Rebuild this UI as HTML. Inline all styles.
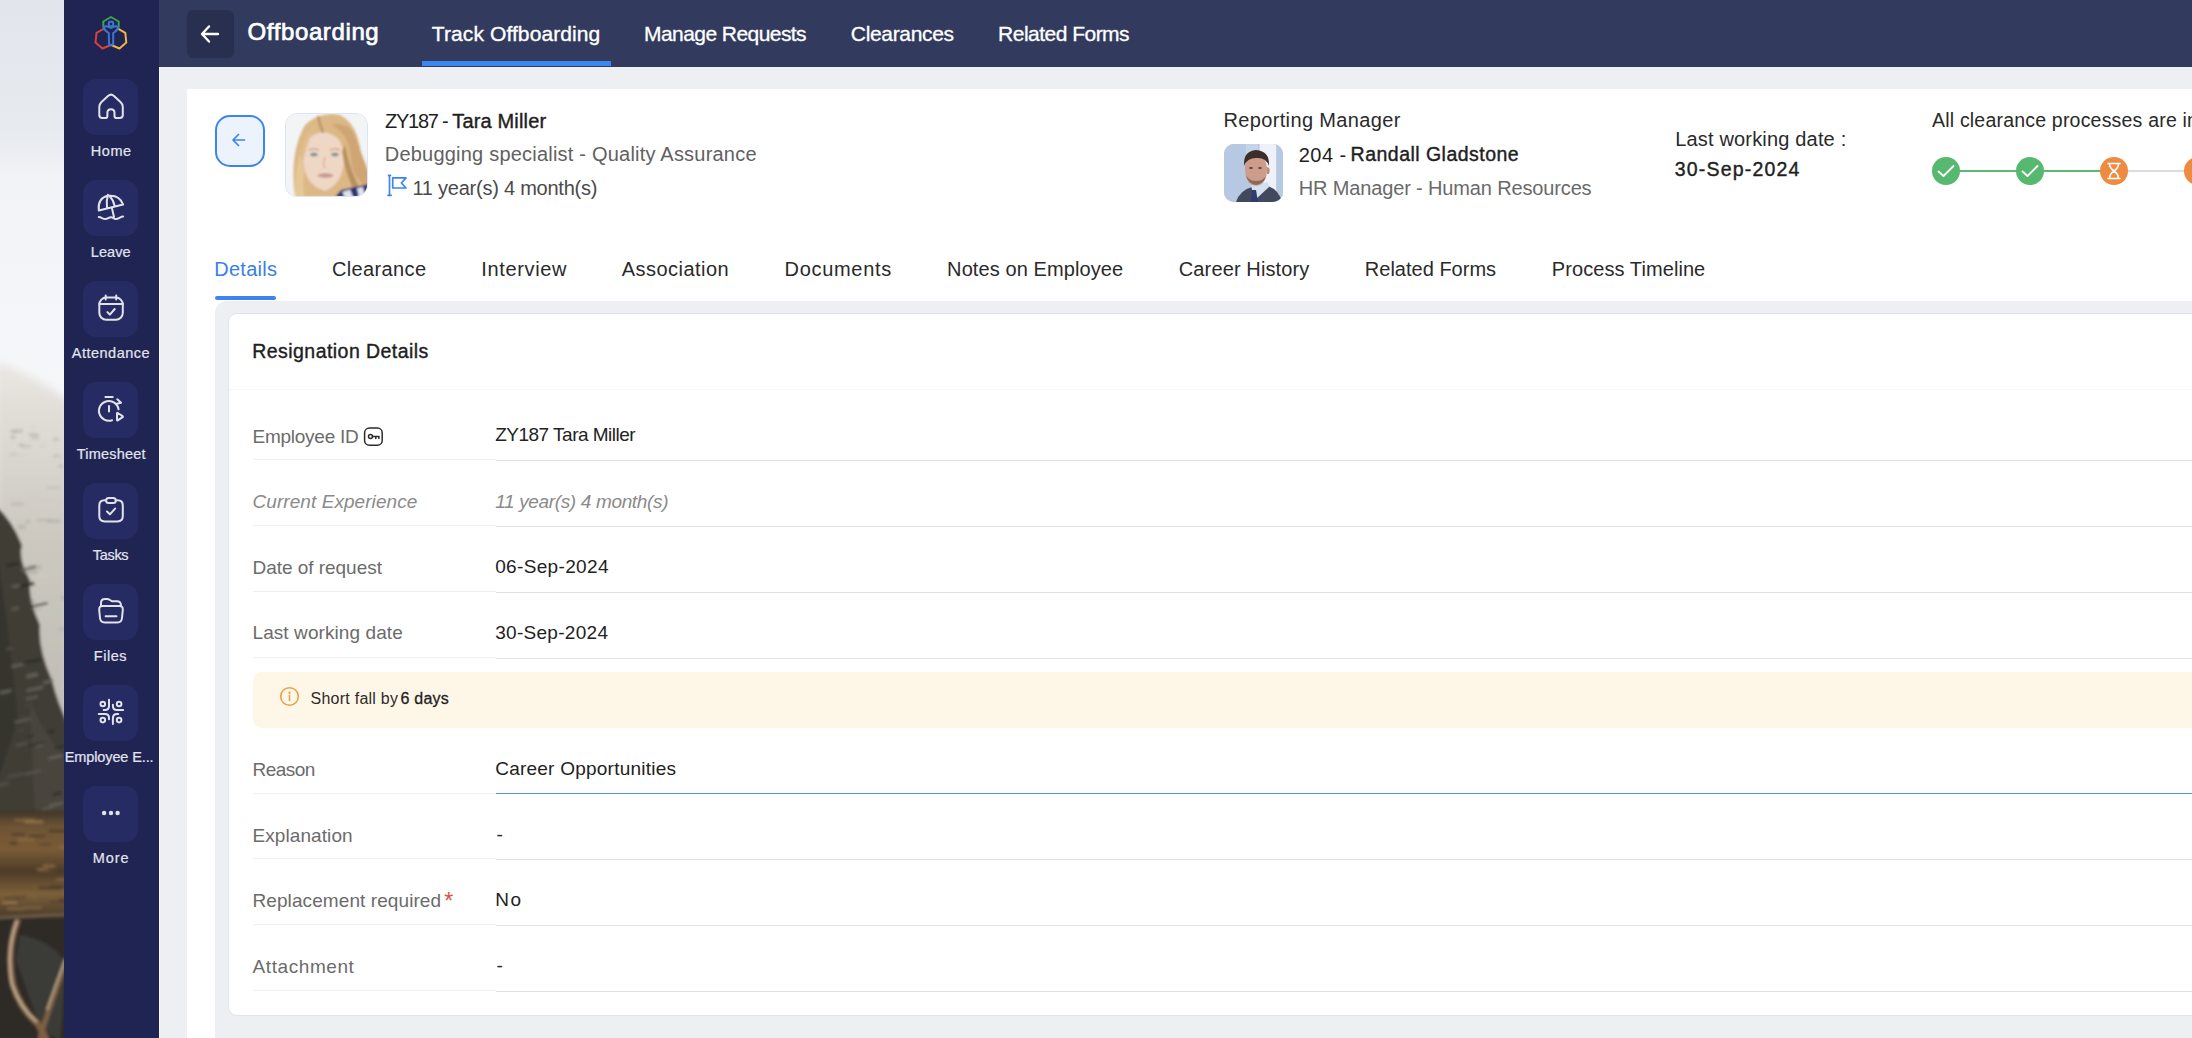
<!DOCTYPE html>
<html><head><meta charset="utf-8">
<style>
html,body{margin:0;padding:0;}
body{width:2192px;height:1038px;overflow:hidden;position:relative;background:#eeeff3;font-family:"Liberation Sans",sans-serif;}
.a{position:absolute;}
.t{position:absolute;line-height:1;white-space:nowrap;}
.sbi{position:absolute;left:83px;width:55px;height:56px;border-radius:13px;background:#262c63;}
.sbi svg{position:absolute;left:14px;top:14px;width:27px;height:27px;}
.hl{position:absolute;height:1px;}
</style></head>
<body>
<!-- left background photo strip -->
<svg class="a" style="left:0;top:0" width="64" height="1038" viewBox="0 0 64 1038">
  <defs>
    <linearGradient id="sky" x1="0" y1="0" x2="0" y2="1"><stop offset="0" stop-color="#e2e6ec"/><stop offset="0.33" stop-color="#e7eaef"/><stop offset="0.45" stop-color="#f1f3f7"/><stop offset="1" stop-color="#f6f7f9"/></linearGradient>
    <linearGradient id="mist" x1="0" y1="0" x2="0" y2="1"><stop offset="0" stop-color="#e9e7e2"/><stop offset="0.25" stop-color="#cdc9c0"/><stop offset="0.7" stop-color="#b7b4ad"/><stop offset="1" stop-color="#a8a6a0"/></linearGradient>
    <linearGradient id="brown" x1="0" y1="0" x2="0" y2="1"><stop offset="0" stop-color="#3d3428"/><stop offset="0.15" stop-color="#6e5334"/><stop offset="0.35" stop-color="#7a5b36"/><stop offset="0.55" stop-color="#4d3b28"/><stop offset="0.75" stop-color="#7d603a"/><stop offset="1" stop-color="#3f3224"/></linearGradient>
    <filter id="bl"><feGaussianBlur stdDeviation="1.5"/></filter><filter id="bl3"><feGaussianBlur stdDeviation="4"/></filter>
  </defs>
  <rect x="0" y="0" width="64" height="400" fill="url(#sky)"/>
  <g filter="url(#bl)">
  <path d="M-5 362 Q30 372 70 402 L70 1040 L-5 1040 Z" fill="url(#mist)" filter="url(#bl3)"/>
  <path d="M-5 505 Q12 520 22 545 Q18 560 30 580 Q28 600 40 625 Q38 650 52 680 Q58 705 70 728 L70 815 L-5 815 Z" fill="#3f3d36"/>
  <path d="M-5 540 Q8 620 18 720 L-5 790 Z" fill="#35342f"/>
  <path d="M30 700 Q45 740 70 760 L70 815 L35 815 Z" fill="#48453d"/>
  <rect x="-5" y="810" width="75" height="112" fill="url(#brown)"/>
  <rect x="-5" y="918" width="75" height="125" fill="#2e2b27"/><path d="M16 960 Q30 1000 42 1030 L60 1040 L66 962 Q50 940 20 935 Z" fill="#3b3a37"/>
  <rect x="20.7" y="445.3" width="10.5" height="2.2" fill="#8f8d88" opacity="0.3"/>
  <rect x="58.2" y="464.4" width="4.9" height="3.3" fill="#9c9a94" opacity="0.35"/>
  <rect x="52.9" y="437.1" width="6.2" height="3.9" fill="#a9a7a1" opacity="0.35"/>
  <rect x="36.9" y="519.0" width="13.8" height="2.1" fill="#9c9a94" opacity="0.35"/>
  <rect x="18.5" y="443.3" width="5.2" height="2.9" fill="#9c9a94" opacity="0.35"/>
  <rect x="12.0" y="429.2" width="11.1" height="3.7" fill="#8f8d88" opacity="0.3"/>
  <rect x="27.4" y="494.2" width="9.9" height="3.4" fill="#cfccc5" opacity="0.4"/>
  <rect x="15.9" y="453.9" width="11.8" height="2.2" fill="#cfccc5" opacity="0.4"/>
  <rect x="46.7" y="486.4" width="13.8" height="2.4" fill="#b3b0a9" opacity="0.4"/>
  <rect x="10.6" y="502.6" width="13.3" height="3.3" fill="#a9a7a1" opacity="0.35"/>
  <rect x="48.9" y="571.9" width="12.8" height="2.9" fill="#cfccc5" opacity="0.4"/>
  <rect x="38.0" y="574.0" width="8.6" height="4.5" fill="#cfccc5" opacity="0.4"/>
  <rect x="30.3" y="599.2" width="4.6" height="4.1" fill="#8f8d88" opacity="0.3"/>
  <rect x="63.6" y="646.6" width="6.8" height="3.2" fill="#cfccc5" opacity="0.4"/>
  <rect x="10.8" y="435.1" width="4.6" height="4.3" fill="#9c9a94" opacity="0.35"/>
  <rect x="47.3" y="519.4" width="13.2" height="3.5" fill="#9c9a94" opacity="0.35"/>
  <rect x="28.7" y="564.8" width="12.8" height="4.5" fill="#8f8d88" opacity="0.3"/>
  <rect x="17.8" y="524.6" width="7.6" height="4.7" fill="#9c9a94" opacity="0.35"/>
  <rect x="9.7" y="452.9" width="6.3" height="2.7" fill="#b3b0a9" opacity="0.4"/>
  <rect x="53.2" y="454.7" width="6.8" height="2.4" fill="#8f8d88" opacity="0.3"/>
  <rect x="23.6" y="569.9" width="13.5" height="4.1" fill="#8f8d88" opacity="0.3"/>
  <rect x="60.8" y="596.5" width="11.4" height="3.4" fill="#8f8d88" opacity="0.3"/>
  <rect x="25.1" y="519.7" width="5.0" height="3.9" fill="#a9a7a1" opacity="0.35"/>
  <rect x="28.2" y="433.0" width="10.0" height="2.3" fill="#8f8d88" opacity="0.3"/>
  <rect x="9.7" y="430.4" width="7.6" height="2.1" fill="#9c9a94" opacity="0.35"/>
  <rect x="39.3" y="444.6" width="6.5" height="3.0" fill="#cfccc5" opacity="0.4"/>
  <rect x="30.3" y="434.6" width="8.9" height="4.9" fill="#b3b0a9" opacity="0.4"/>
  <rect x="31.0" y="425.8" width="5.0" height="3.0" fill="#cfccc5" opacity="0.4"/>
  <rect x="30.6" y="607.6" width="9.2" height="2.6" fill="#8f8d88" opacity="0.3"/>
  <rect x="58.5" y="627.4" width="7.0" height="3.9" fill="#a9a7a1" opacity="0.35"/>
  <rect x="20.7" y="568.4" width="15.3" height="3.1" fill="#6a675e" opacity="0.8" transform="rotate(-12 20.7 568.4)"/>
  <rect x="18.4" y="584.7" width="15.7" height="4.0" fill="#2c2d28" opacity="0.8" transform="rotate(-12 18.4 584.7)"/>
  <rect x="48.0" y="757.3" width="14.9" height="2.5" fill="#6a675e" opacity="0.8" transform="rotate(-12 48.0 757.3)"/>
  <rect x="28.6" y="732.0" width="17.9" height="3.6" fill="#47443b" opacity="0.8" transform="rotate(-12 28.6 732.0)"/>
  <rect x="14.1" y="720.8" width="17.5" height="2.9" fill="#5e5b52" opacity="0.8" transform="rotate(-12 14.1 720.8)"/>
  <rect x="11.7" y="585.8" width="8.4" height="2.4" fill="#6a675e" opacity="0.8" transform="rotate(-12 11.7 585.8)"/>
  <rect x="-1.9" y="783.7" width="10.1" height="3.3" fill="#54524a" opacity="0.8" transform="rotate(-12 -1.9 783.7)"/>
  <rect x="54.4" y="746.9" width="15.0" height="3.0" fill="#2c2d28" opacity="0.8" transform="rotate(-12 54.4 746.9)"/>
  <rect x="24.9" y="704.4" width="7.0" height="3.9" fill="#47443b" opacity="0.8" transform="rotate(-12 24.9 704.4)"/>
  <rect x="26.7" y="735.6" width="7.0" height="2.3" fill="#2c2d28" opacity="0.8" transform="rotate(-12 26.7 735.6)"/>
  <rect x="-0.3" y="691.3" width="11.6" height="3.3" fill="#6a675e" opacity="0.8" transform="rotate(-12 -0.3 691.3)"/>
  <rect x="49.2" y="804.3" width="13.9" height="2.7" fill="#6a675e" opacity="0.8" transform="rotate(-12 49.2 804.3)"/>
  <rect x="47.6" y="730.6" width="7.2" height="3.5" fill="#2c2d28" opacity="0.8" transform="rotate(-12 47.6 730.6)"/>
  <rect x="24.9" y="772.8" width="15.9" height="2.4" fill="#5e5b52" opacity="0.8" transform="rotate(-12 24.9 772.8)"/>
  <rect x="11.2" y="665.3" width="15.2" height="2.7" fill="#6a675e" opacity="0.8" transform="rotate(-12 11.2 665.3)"/>
  <rect x="26.4" y="689.2" width="16.9" height="2.8" fill="#6a675e" opacity="0.8" transform="rotate(-12 26.4 689.2)"/>
  <rect x="6.1" y="564.0" width="12.1" height="3.7" fill="#2c2d28" opacity="0.8" transform="rotate(-12 6.1 564.0)"/>
  <rect x="35.7" y="745.1" width="7.8" height="2.3" fill="#6a675e" opacity="0.8" transform="rotate(-12 35.7 745.1)"/>
  <rect x="43.0" y="681.4" width="9.9" height="3.0" fill="#6a675e" opacity="0.8" transform="rotate(-12 43.0 681.4)"/>
  <rect x="27.9" y="745.2" width="16.6" height="2.1" fill="#2c2d28" opacity="0.8" transform="rotate(-12 27.9 745.2)"/>
  <rect x="15.2" y="744.0" width="12.1" height="3.1" fill="#54524a" opacity="0.8" transform="rotate(-12 15.2 744.0)"/>
  <rect x="25.5" y="697.6" width="12.1" height="3.0" fill="#5e5b52" opacity="0.8" transform="rotate(-12 25.5 697.6)"/>
  <rect x="26.0" y="674.7" width="11.7" height="3.9" fill="#6a675e" opacity="0.8" transform="rotate(-12 26.0 674.7)"/>
  <rect x="52.3" y="793.2" width="9.1" height="3.1" fill="#2c2d28" opacity="0.8" transform="rotate(-12 52.3 793.2)"/>
  <rect x="5.5" y="648.2" width="6.9" height="2.5" fill="#54524a" opacity="0.8" transform="rotate(-12 5.5 648.2)"/>
  <rect x="11.2" y="607.8" width="7.5" height="3.6" fill="#5e5b52" opacity="0.8" transform="rotate(-12 11.2 607.8)"/>
  <rect x="6.9" y="776.0" width="17.6" height="2.4" fill="#54524a" opacity="0.8" transform="rotate(-12 6.9 776.0)"/>
  <rect x="22.7" y="661.3" width="17.9" height="3.7" fill="#2c2d28" opacity="0.8" transform="rotate(-12 22.7 661.3)"/>
  <rect x="41.8" y="808.3" width="10.8" height="2.8" fill="#5e5b52" opacity="0.8" transform="rotate(-12 41.8 808.3)"/>
  <rect x="17.7" y="729.4" width="6.2" height="3.1" fill="#47443b" opacity="0.8" transform="rotate(-12 17.7 729.4)"/>
  <rect x="30.1" y="605.7" width="17.5" height="2.2" fill="#2c2d28" opacity="0.8" transform="rotate(-12 30.1 605.7)"/>
  <rect x="14.5" y="819.0" width="20.5" height="2.5" fill="#8a6a45" opacity="0.8"/>
  <rect x="48.8" y="900.0" width="18.8" height="3.9" fill="#5c472f" opacity="0.8"/>
  <rect x="7.3" y="906.9" width="17.1" height="3.4" fill="#7e6040" opacity="0.8"/>
  <rect x="15.3" y="895.0" width="10.9" height="3.8" fill="#4a3a28" opacity="0.8"/>
  <rect x="56.2" y="878.4" width="20.8" height="2.2" fill="#8a6a45" opacity="0.8"/>
  <rect x="2.1" y="901.3" width="15.3" height="2.7" fill="#9a7a50" opacity="0.8"/>
  <rect x="23.9" y="906.5" width="17.9" height="2.1" fill="#8a6a45" opacity="0.8"/>
  <rect x="56.2" y="911.9" width="12.2" height="2.4" fill="#4a3a28" opacity="0.8"/>
  <rect x="37.0" y="868.1" width="11.3" height="2.9" fill="#8a6a45" opacity="0.8"/>
  <rect x="14.8" y="895.4" width="23.9" height="2.1" fill="#7e6040" opacity="0.8"/>
  <rect x="43.5" y="870.1" width="11.0" height="2.9" fill="#5c472f" opacity="0.8"/>
  <rect x="4.6" y="896.9" width="14.9" height="3.0" fill="#5c472f" opacity="0.8"/>
  <rect x="58.2" y="845.8" width="11.4" height="2.5" fill="#8a6a45" opacity="0.8"/>
  <rect x="49.6" y="885.7" width="18.2" height="2.8" fill="#4a3a28" opacity="0.8"/>
  <rect x="58.9" y="898.7" width="8.2" height="3.3" fill="#4a3a28" opacity="0.8"/>
  <rect x="24.7" y="820.5" width="18.6" height="2.8" fill="#9a7a50" opacity="0.8"/>
  <rect x="39.6" y="843.2" width="11.9" height="2.6" fill="#5c472f" opacity="0.8"/>
  <rect x="9.5" y="841.9" width="8.1" height="2.7" fill="#4a3a28" opacity="0.8"/>
  <rect x="58.3" y="869.7" width="11.9" height="3.9" fill="#4a3a28" opacity="0.8"/>
  <rect x="11.5" y="833.3" width="13.4" height="2.2" fill="#4a3a28" opacity="0.8"/>
  <rect x="29.2" y="835.1" width="16.1" height="2.0" fill="#4a3a28" opacity="0.8"/>
  <rect x="48.7" y="829.4" width="17.4" height="2.8" fill="#4a3a28" opacity="0.8"/>
  <rect x="16.9" y="838.3" width="17.4" height="3.1" fill="#8a6a45" opacity="0.8"/>
  <rect x="38.8" y="886.6" width="22.1" height="2.8" fill="#4a3a28" opacity="0.8"/>
  <rect x="42.7" y="864.4" width="12.5" height="3.2" fill="#8a6a45" opacity="0.8"/>
  <path d="M18 919 Q6 950 13 985 Q21 1010 38 1024 L47 1040" stroke="#7d6043" stroke-width="6" fill="none"/>
  <path d="M17 921 Q6 950 12 984 Q20 1008 37 1022" stroke="#d9c9b0" stroke-width="1.6" fill="none"/>
  <path d="M67 958 Q56 990 49 1010 Q42 1030 40 1040" stroke="#7d6043" stroke-width="5" fill="none"/>
  <path d="M65 960 Q54 990 47 1010" stroke="#cdbb9f" stroke-width="1.4" fill="none"/>
  <path d="M-5 918 Q30 916 70 914" stroke="#6f5e48" stroke-width="2.5" fill="none"/>
  </g>
</svg>
<!-- sidebar -->
<div class="a" style="left:64px;top:0;width:95px;height:1038px;background:#1f2453;"></div>
<div class="a" style="left:159px;top:67px;width:1px;height:971px;background:#f7f8fa;"></div>
<!-- logo -->
<svg class="a" style="left:92px;top:15px" width="38" height="37" viewBox="0 0 38 37">
  <g fill="none" stroke-width="2" stroke-linejoin="round">
    <path d="M13 13.2 L4.5 17.8 L3.5 27.5 L10.5 33.5 L18.8 30" stroke="#d9423a"/>
    <path d="M25 13.2 L33.3 17.8 L34.3 27.5 L27.5 33.5 L19.2 30" stroke="#f2b640"/>
    <path d="M11.3 12.4 L11.3 6.5 L19 2 L26.7 6.5 L26.7 12.4" stroke="#3ea34a"/>
    <path d="M12 12 Q14.5 10.2 19 13 Q23.5 10.2 26 12 Q26.3 14.5 22 17.5 L21.2 18 L21.2 29 Q19 31.2 17 29 L16.8 18 L16 17.5 Q11.7 14.5 12 12 Z" stroke="#3a78d0"/>
    <rect x="16.8" y="6.8" width="4.4" height="4.4" rx="1.2" stroke="#3a78d0"/>
  </g>
</svg>
<!-- sidebar icons -->
<div class="sbi" style="top:79px"></div>
<svg class="a" style="left:92px;top:87px" width="38" height="38" viewBox="0 0 38 38" fill="none" stroke="#e2e3ea" stroke-width="2" stroke-linejoin="round" stroke-linecap="round"><path d="M7.3 20 Q7.3 17 9.5 15 L16 9 Q19 6.3 22 9 L28.5 15 Q30.8 17 30.8 20 V28 Q30.8 31.1 27.7 31.1 H24.5 Q22.5 31.1 22.5 29 V25.8 Q22.5 22.3 19 22.3 Q15.4 22.3 15.4 25.8 V29 Q15.4 31.1 13.3 31.1 H10.4 Q7.3 31.1 7.3 28 Z"/></svg>
<div class="sbi" style="top:180px"></div>
<svg class="a" style="left:92px;top:188px" width="38" height="38" viewBox="0 0 38 38" fill="none" stroke="#e2e3ea" stroke-width="2" stroke-linejoin="round" stroke-linecap="round"><path d="M6.8 22.5 Q5.5 10 15.9 7.8 Q27.5 6.5 31.1 16.5 Z M15.9 7.5 Q14 13 15 19.7 M17.5 8 Q21.5 12 22.5 17.8 M19.8 19.5 L22 29 M15.9 6.8 V8"/><path d="M6.8 29.1 C9.5 29.1 10.5 31.1 13.2 31.1 C16 31.1 16.5 29.3 19 29.3 C21.5 29.3 21.5 31.1 23.8 31.1 C26.5 31.1 28.5 28.6 31.1 28.6"/></svg>
<div class="sbi" style="top:281px"></div>
<svg class="a" style="left:92px;top:289px" width="38" height="38" viewBox="0 0 38 38" fill="none" stroke="#e2e3ea" stroke-width="2" stroke-linejoin="round" stroke-linecap="round"><rect x="7.3" y="8.6" width="23.5" height="22.2" rx="7"/><path d="M7.3 15 H30.8 M13.7 6.6 V10.6 M24.2 6.6 V10.6 M15.4 23.1 L17.9 25.6 L22.7 20"/></svg>
<div class="sbi" style="top:382px"></div>
<svg class="a" style="left:92px;top:390px" width="38" height="38" viewBox="0 0 38 38" fill="none" stroke="#e2e3ea" stroke-width="2" stroke-linejoin="round" stroke-linecap="round"><path d="M13.4 7.1 H20.7 M17 16.1 V21.6 M20.1 30.2 A9.9 9.9 0 1 1 26.6 19.3 M25.3 9.2 L29 12.8 L24.8 13.8"/><path d="M25 23.3 Q25 22.6 25.7 23 L30.6 26.2 Q31.2 26.7 30.6 27.2 L25.7 30.4 Q25 30.8 25 30 Z"/></svg>
<div class="sbi" style="top:483px"></div>
<svg class="a" style="left:92px;top:491px" width="38" height="38" viewBox="0 0 38 38" fill="none" stroke="#e2e3ea" stroke-width="2" stroke-linejoin="round" stroke-linecap="round"><path d="M14.1 9.2 H12.5 Q7.3 9.2 7.3 14.5 V25 Q7.3 30.4 12.7 30.4 H25.4 Q30.8 30.4 30.8 25 V14.5 Q30.8 9.2 25.5 9.2 H23.8"/><rect x="14.1" y="7" width="9.7" height="5.1" rx="2.5"/><path d="M15 20.5 L17.9 23.3 L23.1 17.6"/></svg>
<div class="sbi" style="top:584px"></div>
<svg class="a" style="left:92px;top:592px" width="38" height="38" viewBox="0 0 38 38" fill="none" stroke="#e2e3ea" stroke-width="2" stroke-linejoin="round" stroke-linecap="round"><path d="M10.5 13.9 H27.5 Q31 13.9 30.8 18 L30 26 Q29.6 30.4 25.5 30.4 H12.5 Q8.4 30.4 8 26 L7.2 18 Q7 13.9 10.5 13.9 Z M9 13.9 V11 Q9 7 13 7 H15 Q16.5 7 18 8 L19.5 9 Q20.2 9.3 21 9.3 H25 Q28.8 9.3 29 13.5 M13.6 24.2 H24.5"/></svg>
<div class="sbi" style="top:685px"></div>
<svg class="a" style="left:92px;top:693px" width="38" height="38" viewBox="0 0 38 38" fill="none" stroke="#e2e3ea" stroke-width="2" stroke-linejoin="round" stroke-linecap="round"><circle cx="10.8" cy="11" r="2.3"/><circle cx="27.1" cy="11" r="2.3"/><circle cx="10.8" cy="27.1" r="2.3"/><circle cx="27.1" cy="27.1" r="2.3"/><path d="M17 6.8 V13 Q17 17 13 17 H11.7 M20.9 11.7 V13 Q20.9 17 25 17 H31.1 M6.8 21.1 H13 Q17 21.1 17 25 V26.2 M26.2 21.1 H25 Q20.9 21.1 20.9 25.5 V31.1"/></svg>
<div class="sbi" style="top:786px"></div>
<svg class="a" style="left:92px;top:794px" width="38" height="38" viewBox="0 0 38 38" fill="#e2e3ea"><circle cx="12.1" cy="19" r="2.2"/><circle cx="19" cy="19" r="2.2"/><circle cx="25.6" cy="19" r="2.2"/></svg>

<!-- top nav -->
<div class="a" style="left:159px;top:0;width:2033px;height:67px;background:#323b5e;"></div>
<div class="a" style="left:187px;top:10px;width:47px;height:48px;border-radius:6px;background:#29304f;"></div>
<svg class="a" style="left:199px;top:23px" width="22" height="22" viewBox="0 0 22 22" fill="none" stroke="#fff" stroke-width="2.4" stroke-linecap="round" stroke-linejoin="round"><path d="M19 11 H3.5 M10 3.5 L3 11 L10 18.5"/></svg>
<div class="a" style="left:422px;top:61px;width:189px;height:5px;background:#3b86f0;"></div>

<!-- header card -->
<div class="a" style="left:187px;top:89px;width:2005px;height:949px;background:#fff;"></div>
<div class="a" style="left:215px;top:115px;width:46px;height:48px;border:2.5px solid #3b84f2;border-radius:15px;background:#edf3fd;"></div>
<svg class="a" style="left:229px;top:130px" width="20" height="20" viewBox="0 0 20 20" fill="none" stroke="#3b84f2" stroke-width="1.7" stroke-linecap="round" stroke-linejoin="round"><path d="M15.5 10 H4.5 M9.5 4.5 L4 10 L9.5 15.5"/></svg>

<!-- avatar 1 -->
<div class="a" style="left:285px;top:113px;width:83px;height:84px;border-radius:12px;overflow:hidden;border:1px solid #dde5f1;box-sizing:border-box;background:#f3f4f6;">
<svg class="a" style="left:-1px;top:-1px" width="83" height="84" viewBox="0 0 83 84">
  <defs><filter id="sf"><feGaussianBlur stdDeviation="0.8"/></filter></defs>
  <rect width="83" height="84" fill="#f3f4f6"/>
  <g filter="url(#sf)">
  <path d="M10 84 Q4 40 20 12 Q35 -2 55 2 Q72 10 76 40 Q79 60 84 70 L84 84 Z" fill="#dcb886"/>
  <path d="M18 46 Q18 21 38 19 Q59 21 59 46 Q58 71 40 78 Q19 72 18 46 Z" fill="#efd7c6"/>
  <path d="M15 60 Q13 24 34 8 Q24 22 19 45 Z" fill="#e0bf8c"/>
  <path d="M46 12 Q64 20 66 46 Q68 66 84 76 L84 60 Q76 40 70 22 Q62 8 46 12 Z" fill="#cfa673"/>
  <path d="M60 32 Q64 56 77 80 L71 82 Q60 60 57 38 Z" fill="#b98f5f"/>
  <path d="M33 3 Q35 12 38 20" stroke="#b08c62" stroke-width="2" fill="none"/>
  <path d="M10 84 Q9 60 15 40 L19 60 Q17 75 20 84 Z" fill="#e6c796"/>
  <path d="M24 37 Q29 35 34 37 M45 37 Q50 35 55 37" stroke="#b48d6e" stroke-width="1.2" fill="none"/>
  <ellipse cx="29" cy="41.5" rx="3.8" ry="1.8" fill="#7d8c8c"/><ellipse cx="50" cy="41.5" rx="3.8" ry="1.8" fill="#7d8c8c"/>
  <path d="M40 44 Q37 53 40.5 55" stroke="#d7b29c" stroke-width="1.5" fill="none"/>
  <ellipse cx="40.5" cy="62.5" rx="8" ry="2.2" fill="#c99593"/>
  <path d="M50 84 L56 77 Q70 74 84 71 L84 84 Z" fill="#2d3670"/>
  <path d="M57 79 L65 76.5 L68 84 L60 84 Z M72 75 L78 74 L80 84 L74 84 Z" fill="#dfe3ef"/>
  </g>
</svg></div>
<svg class="a" style="left:386px;top:173px" width="22" height="24" viewBox="0 0 22 24" fill="none" stroke="#3b84f2" stroke-width="1.7" stroke-linejoin="round" stroke-linecap="round"><path d="M3.5 2.6 V22.2 M2.6 2.4 H4.5 M2 22.3 H5.2"/><path d="M6.7 4.9 H20 L15.4 10 L20 15 H6.7 Z"/></svg>

<!-- avatar 2 -->
<div class="a" style="left:1224px;top:144px;width:59px;height:58px;border-radius:10px;overflow:hidden;background:#b5c8e2;">
<svg class="a" style="left:0;top:0" width="59" height="58" viewBox="0 0 59 58">
  <defs><filter id="sf2"><feGaussianBlur stdDeviation="0.6"/></filter></defs>
  <rect width="59" height="58" fill="#b7c9e2"/>
  <g filter="url(#sf2)">
  <rect x="35.6" y="0" width="16.5" height="52" fill="#eef2f8"/>
  <rect x="22" y="0" width="12" height="12" fill="#c5d4e8"/>
  <path d="M12 58 Q16 46 28 43 L44 42 Q55 46 58 58 Z" fill="#434a5e"/>
  <path d="M27 42 L31 56 L45 43 L44 38 Z" fill="#d3e0ef"/>
  <path d="M28 46 L32 46 L34 58 L27 58 Z" fill="#2e3a70"/>
  <path d="M21 24 Q21 12 32 11 Q43 12 43 26 Q43 37 36 41 Q30 43 25 39 Q21 34 21 24 Z" fill="#cd9c8a"/>
  <path d="M22 31 Q24 40 32 41 Q40 40 42 32 Q39 37 32 37 Q25 37 22 31 Z" fill="#8a6a5c"/>
  <path d="M43 23 Q47 23 45 30 L43 30 Z" fill="#c08b76"/>
  <path d="M20 22 Q19 7 32 6 Q46 7 45 22 Q42 13 32 14 Q23 14 20 22 Z" fill="#3b2f29"/>
  <ellipse cx="27" cy="24" rx="2" ry="0.9" fill="#5a4a48"/><ellipse cx="36" cy="24" rx="2" ry="0.9" fill="#5a4a48"/>
  </g>
</svg></div>

<!-- clearance progress -->
<div class="a" style="left:1945px;top:169.5px;width:168px;height:2.5px;background:#5cb973;"></div>
<div class="a" style="left:2113px;top:169.5px;width:90px;height:2.5px;background:#dcdcdc;"></div>
<div class="a" style="left:1931.5px;top:157px;width:28px;height:28px;border-radius:50%;background:#57b96f;"></div>
<div class="a" style="left:2015.5px;top:157px;width:28px;height:28px;border-radius:50%;background:#57b96f;"></div>
<div class="a" style="left:2099.5px;top:157px;width:28px;height:28px;border-radius:50%;background:#ee8b41;"></div>
<div class="a" style="left:2183.5px;top:157px;width:28px;height:28px;border-radius:50%;background:#ee8b41;"></div>
<svg class="a" style="left:1931.5px;top:157px" width="28" height="28" viewBox="0 0 28 28" fill="none" stroke="#fff" stroke-width="1.8" stroke-linecap="round" stroke-linejoin="round"><path d="M6.5 14.5 L11.5 19 L21.5 9"/></svg>
<svg class="a" style="left:2015.5px;top:157px" width="28" height="28" viewBox="0 0 28 28" fill="none" stroke="#fff" stroke-width="1.8" stroke-linecap="round" stroke-linejoin="round"><path d="M6.5 14.5 L11.5 19 L21.5 9"/></svg>
<svg class="a" style="left:2099.5px;top:157px" width="28" height="28" viewBox="0 0 28 28" fill="none" stroke="#fff" stroke-width="1.6" stroke-linecap="round" stroke-linejoin="round"><path d="M8 6.5 H20 M8 21.5 H20 M9.5 6.5 Q9.5 11 14 14 Q18.5 11 18.5 6.5 M9.5 21.5 Q9.5 17 14 14 Q18.5 17 18.5 21.5"/></svg>

<!-- tabs underline -->
<div class="a" style="left:215px;top:296px;width:61px;height:4px;border-radius:2px;background:#3b84f2;"></div>

<!-- grey panel -->
<div class="a" style="left:215px;top:300.5px;width:1977px;height:738px;border-radius:12px 0 0 0;background:#eeeff3;"></div>
<!-- card -->
<div class="a" style="left:228px;top:313px;width:1980px;height:703px;border:1px solid #dfe5ef;border-radius:9px;background:#fff;box-sizing:border-box;"></div>
<div class="hl" style="left:229px;top:389px;width:1963px;background:#f6f7f9;"></div>

<!-- row lines -->
<div class="hl" style="left:253px;top:459px;width:243px;background:#f0f0f0;"></div><div class="hl" style="left:496px;top:460px;width:1696px;background:#e1e1e1;"></div>
<div class="hl" style="left:253px;top:525px;width:243px;background:#f0f0f0;"></div><div class="hl" style="left:496px;top:525.5px;width:1696px;background:#e1e1e1;"></div>
<div class="hl" style="left:253px;top:591px;width:243px;background:#f0f0f0;"></div><div class="hl" style="left:496px;top:591.5px;width:1696px;background:#e1e1e1;"></div>
<div class="hl" style="left:253px;top:657px;width:243px;background:#f0f0f0;"></div><div class="hl" style="left:496px;top:657.5px;width:1696px;background:#e1e1e1;"></div>
<!-- banner -->
<div class="a" style="left:253px;top:671.5px;width:1939px;height:56.5px;border-radius:9px 0 0 9px;background:#fef7e7;"></div>
<svg class="a" style="left:279px;top:686px" width="21" height="21" viewBox="0 0 21 21" fill="none" stroke="#e9a243" stroke-width="1.6" stroke-linecap="round"><circle cx="10.5" cy="10.5" r="8.8"/><path d="M10.5 9.5 V14.5"/><circle cx="10.5" cy="6.8" r="0.4" fill="#e9a243"/></svg>
<div class="hl" style="left:253px;top:793px;width:243px;background:#f0f0f0;"></div><div class="hl" style="left:496px;top:793px;width:1696px;background:#5b95e8;"></div>
<div class="hl" style="left:253px;top:858px;width:243px;background:#f0f0f0;"></div><div class="hl" style="left:496px;top:858.5px;width:1696px;background:#e1e1e1;"></div>
<div class="hl" style="left:253px;top:924px;width:243px;background:#f0f0f0;"></div><div class="hl" style="left:496px;top:924.5px;width:1696px;background:#e1e1e1;"></div>
<div class="hl" style="left:253px;top:990px;width:243px;background:#f0f0f0;"></div><div class="hl" style="left:496px;top:990.5px;width:1696px;background:#e1e1e1;"></div>
<!-- key icon -->
<svg class="a" style="left:363px;top:427px" width="21" height="20" viewBox="0 0 21 20" fill="none" stroke="#2a2a2a" stroke-width="1.5" stroke-linecap="round" stroke-linejoin="round"><rect x="1.6" y="1" width="17.6" height="17.2" rx="4.8"/><circle cx="7.5" cy="9.5" r="2"/><path d="M9.5 9.5 H16 M12.8 9.5 V11.5 M15.9 9.5 V11.5"/></svg>

<div class="t" style="left:247.5px;top:20.28px;font-size:24px;font-weight:400;font-style:normal;color:#ffffff;letter-spacing:0.622px;-webkit-text-stroke:0.7px #fff;">Offboarding</div>
<div class="t" style="left:431.8px;top:22.82px;font-size:21px;font-weight:400;font-style:normal;color:#ffffff;letter-spacing:0.099px;-webkit-text-stroke:0.35px #fff;">Track Offboarding</div>
<div class="t" style="left:644.0px;top:22.72px;font-size:21px;font-weight:400;font-style:normal;color:#ffffff;letter-spacing:-0.560px;-webkit-text-stroke:0.3px #fff;">Manage Requests</div>
<div class="t" style="left:850.8px;top:22.52px;font-size:21px;font-weight:400;font-style:normal;color:#ffffff;letter-spacing:-0.336px;-webkit-text-stroke:0.3px #fff;">Clearances</div>
<div class="t" style="left:998.1px;top:22.52px;font-size:21px;font-weight:400;font-style:normal;color:#ffffff;letter-spacing:-0.517px;-webkit-text-stroke:0.3px #fff;">Related Forms</div>
<div class="t" style="left:90.8px;top:143.53px;font-size:14.5px;font-weight:400;font-style:normal;color:#e3e5ee;letter-spacing:0.541px;-webkit-text-stroke:0.2px #e3e5ee;">Home</div>
<div class="t" style="left:90.8px;top:244.53px;font-size:14.5px;font-weight:400;font-style:normal;color:#e3e5ee;letter-spacing:0.073px;-webkit-text-stroke:0.2px #e3e5ee;">Leave</div>
<div class="t" style="left:71.8px;top:345.53px;font-size:14.5px;font-weight:400;font-style:normal;color:#e3e5ee;letter-spacing:0.493px;-webkit-text-stroke:0.2px #e3e5ee;">Attendance</div>
<div class="t" style="left:76.8px;top:446.53px;font-size:14.5px;font-weight:400;font-style:normal;color:#e3e5ee;letter-spacing:0.206px;-webkit-text-stroke:0.2px #e3e5ee;">Timesheet</div>
<div class="t" style="left:92.8px;top:547.53px;font-size:14.5px;font-weight:400;font-style:normal;color:#e3e5ee;letter-spacing:-0.316px;-webkit-text-stroke:0.2px #e3e5ee;">Tasks</div>
<div class="t" style="left:93.8px;top:648.53px;font-size:14.5px;font-weight:400;font-style:normal;color:#e3e5ee;letter-spacing:0.546px;-webkit-text-stroke:0.2px #e3e5ee;">Files</div>
<div class="t" style="left:64.8px;top:749.53px;font-size:14.5px;font-weight:400;font-style:normal;color:#e3e5ee;letter-spacing:-0.122px;-webkit-text-stroke:0.2px #e3e5ee;">Employee E...</div>
<div class="t" style="left:92.8px;top:850.53px;font-size:14.5px;font-weight:400;font-style:normal;color:#e3e5ee;letter-spacing:0.921px;-webkit-text-stroke:0.2px #e3e5ee;">More</div>
<div class="t" style="left:385.0px;top:110.87px;font-size:20px;font-weight:400;font-style:normal;color:#1f1f1f;letter-spacing:-1.240px;">ZY187 -</div>
<div class="t" style="left:452.3px;top:110.87px;font-size:20px;font-weight:400;font-style:normal;color:#1f1f1f;letter-spacing:0.156px;-webkit-text-stroke:0.4px #1f1f1f;">Tara Miller</div>
<div class="t" style="left:384.8px;top:144.27px;font-size:20px;font-weight:400;font-style:normal;color:#616161;letter-spacing:0.210px;">Debugging specialist - Quality Assurance</div>
<div class="t" style="left:412.4px;top:177.67px;font-size:20px;font-weight:400;font-style:normal;color:#4a4a4a;letter-spacing:-0.234px;">11 year(s) 4 month(s)</div>
<div class="t" style="left:1223.4px;top:110.47px;font-size:20px;font-weight:400;font-style:normal;color:#2a2a2a;letter-spacing:0.362px;">Reporting Manager</div>
<div class="t" style="left:1298.8px;top:145.07px;font-size:20px;font-weight:400;font-style:normal;color:#1f1f1f;letter-spacing:0.429px;">204 -</div>
<div class="t" style="left:1350.6px;top:145.49px;font-size:19.5px;font-weight:400;font-style:normal;color:#1f1f1f;letter-spacing:0.479px;-webkit-text-stroke:0.4px #1f1f1f;">Randall Gladstone</div>
<div class="t" style="left:1298.8px;top:178.37px;font-size:20px;font-weight:400;font-style:normal;color:#6a6a6a;letter-spacing:-0.147px;">HR Manager - Human Resources</div>
<div class="t" style="left:1675.2px;top:128.67px;font-size:20px;font-weight:400;font-style:normal;color:#2a2a2a;letter-spacing:0.174px;">Last working date :</div>
<div class="t" style="left:1674.8px;top:160.29px;font-size:19.5px;font-weight:400;font-style:normal;color:#1f1f1f;letter-spacing:1.175px;-webkit-text-stroke:0.4px #1f1f1f;">30-Sep-2024</div>
<div class="t" style="left:1932.0px;top:110.79px;font-size:19.5px;font-weight:400;font-style:normal;color:#2a2a2a;letter-spacing:0.000px;letter-spacing:0.2px;">All clearance processes are in progress</div>
<div class="t" style="left:214.3px;top:259.17px;font-size:20px;font-weight:400;font-style:normal;color:#3b7ee8;letter-spacing:0.245px;">Details</div>
<div class="t" style="left:332.0px;top:259.17px;font-size:20px;font-weight:400;font-style:normal;color:#2a2a2a;letter-spacing:0.355px;">Clearance</div>
<div class="t" style="left:481.3px;top:259.17px;font-size:20px;font-weight:400;font-style:normal;color:#2a2a2a;letter-spacing:0.646px;">Interview</div>
<div class="t" style="left:621.8px;top:259.17px;font-size:20px;font-weight:400;font-style:normal;color:#2a2a2a;letter-spacing:0.452px;">Association</div>
<div class="t" style="left:784.5px;top:259.17px;font-size:20px;font-weight:400;font-style:normal;color:#2a2a2a;letter-spacing:0.693px;">Documents</div>
<div class="t" style="left:947.1px;top:259.17px;font-size:20px;font-weight:400;font-style:normal;color:#2a2a2a;letter-spacing:0.091px;">Notes on Employee</div>
<div class="t" style="left:1178.8px;top:259.17px;font-size:20px;font-weight:400;font-style:normal;color:#2a2a2a;letter-spacing:0.122px;">Career History</div>
<div class="t" style="left:1364.8px;top:259.17px;font-size:20px;font-weight:400;font-style:normal;color:#2a2a2a;letter-spacing:0.012px;">Related Forms</div>
<div class="t" style="left:1551.8px;top:259.17px;font-size:20px;font-weight:400;font-style:normal;color:#2a2a2a;letter-spacing:0.078px;">Process Timeline</div>
<div class="t" style="left:252.3px;top:341.79px;font-size:19.5px;font-weight:400;font-style:normal;color:#1f1f1f;letter-spacing:0.444px;-webkit-text-stroke:0.4px #1f1f1f;">Resignation Details</div>
<div class="t" style="left:252.5px;top:426.92px;font-size:19px;font-weight:400;font-style:normal;color:#6b6b6b;letter-spacing:-0.247px;">Employee ID</div>
<div class="t" style="left:495.2px;top:425.42px;font-size:19px;font-weight:400;font-style:normal;color:#222222;letter-spacing:-0.505px;">ZY187 Tara Miller</div>
<div class="t" style="left:252.5px;top:491.62px;font-size:19px;font-weight:400;font-style:italic;color:#8a8a8a;letter-spacing:0.065px;">Current Experience</div>
<div class="t" style="left:495.2px;top:491.52px;font-size:19px;font-weight:400;font-style:italic;color:#8a8a8a;letter-spacing:-0.345px;">11 year(s) 4 month(s)</div>
<div class="t" style="left:252.5px;top:557.92px;font-size:19px;font-weight:400;font-style:normal;color:#6b6b6b;letter-spacing:-0.036px;">Date of request</div>
<div class="t" style="left:495.2px;top:557.32px;font-size:19px;font-weight:400;font-style:normal;color:#222222;letter-spacing:0.344px;">06-Sep-2024</div>
<div class="t" style="left:252.5px;top:623.12px;font-size:19px;font-weight:400;font-style:normal;color:#6b6b6b;letter-spacing:0.080px;">Last working date</div>
<div class="t" style="left:495.2px;top:622.52px;font-size:19px;font-weight:400;font-style:normal;color:#222222;letter-spacing:0.294px;">30-Sep-2024</div>
<div class="t" style="left:252.5px;top:760.42px;font-size:19px;font-weight:400;font-style:normal;color:#6b6b6b;letter-spacing:-0.538px;">Reason</div>
<div class="t" style="left:495.2px;top:759.42px;font-size:19px;font-weight:400;font-style:normal;color:#222222;letter-spacing:0.234px;">Career Opportunities</div>
<div class="t" style="left:252.5px;top:825.92px;font-size:19px;font-weight:400;font-style:normal;color:#6b6b6b;letter-spacing:0.080px;">Explanation</div>
<div class="t" style="left:496.4px;top:825.42px;font-size:19px;font-weight:400;font-style:normal;color:#222222;letter-spacing:0.000px;">-</div>
<div class="t" style="left:252.5px;top:891.02px;font-size:19px;font-weight:400;font-style:normal;color:#6b6b6b;letter-spacing:0.087px;">Replacement required</div>
<div class="t" style="left:495.2px;top:890.12px;font-size:19px;font-weight:400;font-style:normal;color:#222222;letter-spacing:1.512px;">No</div>
<div class="t" style="left:252.5px;top:956.82px;font-size:19px;font-weight:400;font-style:normal;color:#6b6b6b;letter-spacing:0.588px;">Attachment</div>
<div class="t" style="left:496.4px;top:956.42px;font-size:19px;font-weight:400;font-style:normal;color:#222222;letter-spacing:0.000px;">-</div>
<div class="t" style="left:444.2px;top:890.03px;font-size:23px;font-weight:400;font-style:normal;color:#d9534f;letter-spacing:0.000px;">*</div>
<div class="t" style="left:310.5px;top:691.36px;font-size:16px;font-weight:400;font-style:normal;color:#2b2b2b;letter-spacing:0.251px;">Short fall by</div>
<div class="t" style="left:400.6px;top:691.36px;font-size:16px;font-weight:400;font-style:normal;color:#1f1f1f;letter-spacing:0.212px;-webkit-text-stroke:0.3px #1f1f1f;">6 days</div>
</body></html>
